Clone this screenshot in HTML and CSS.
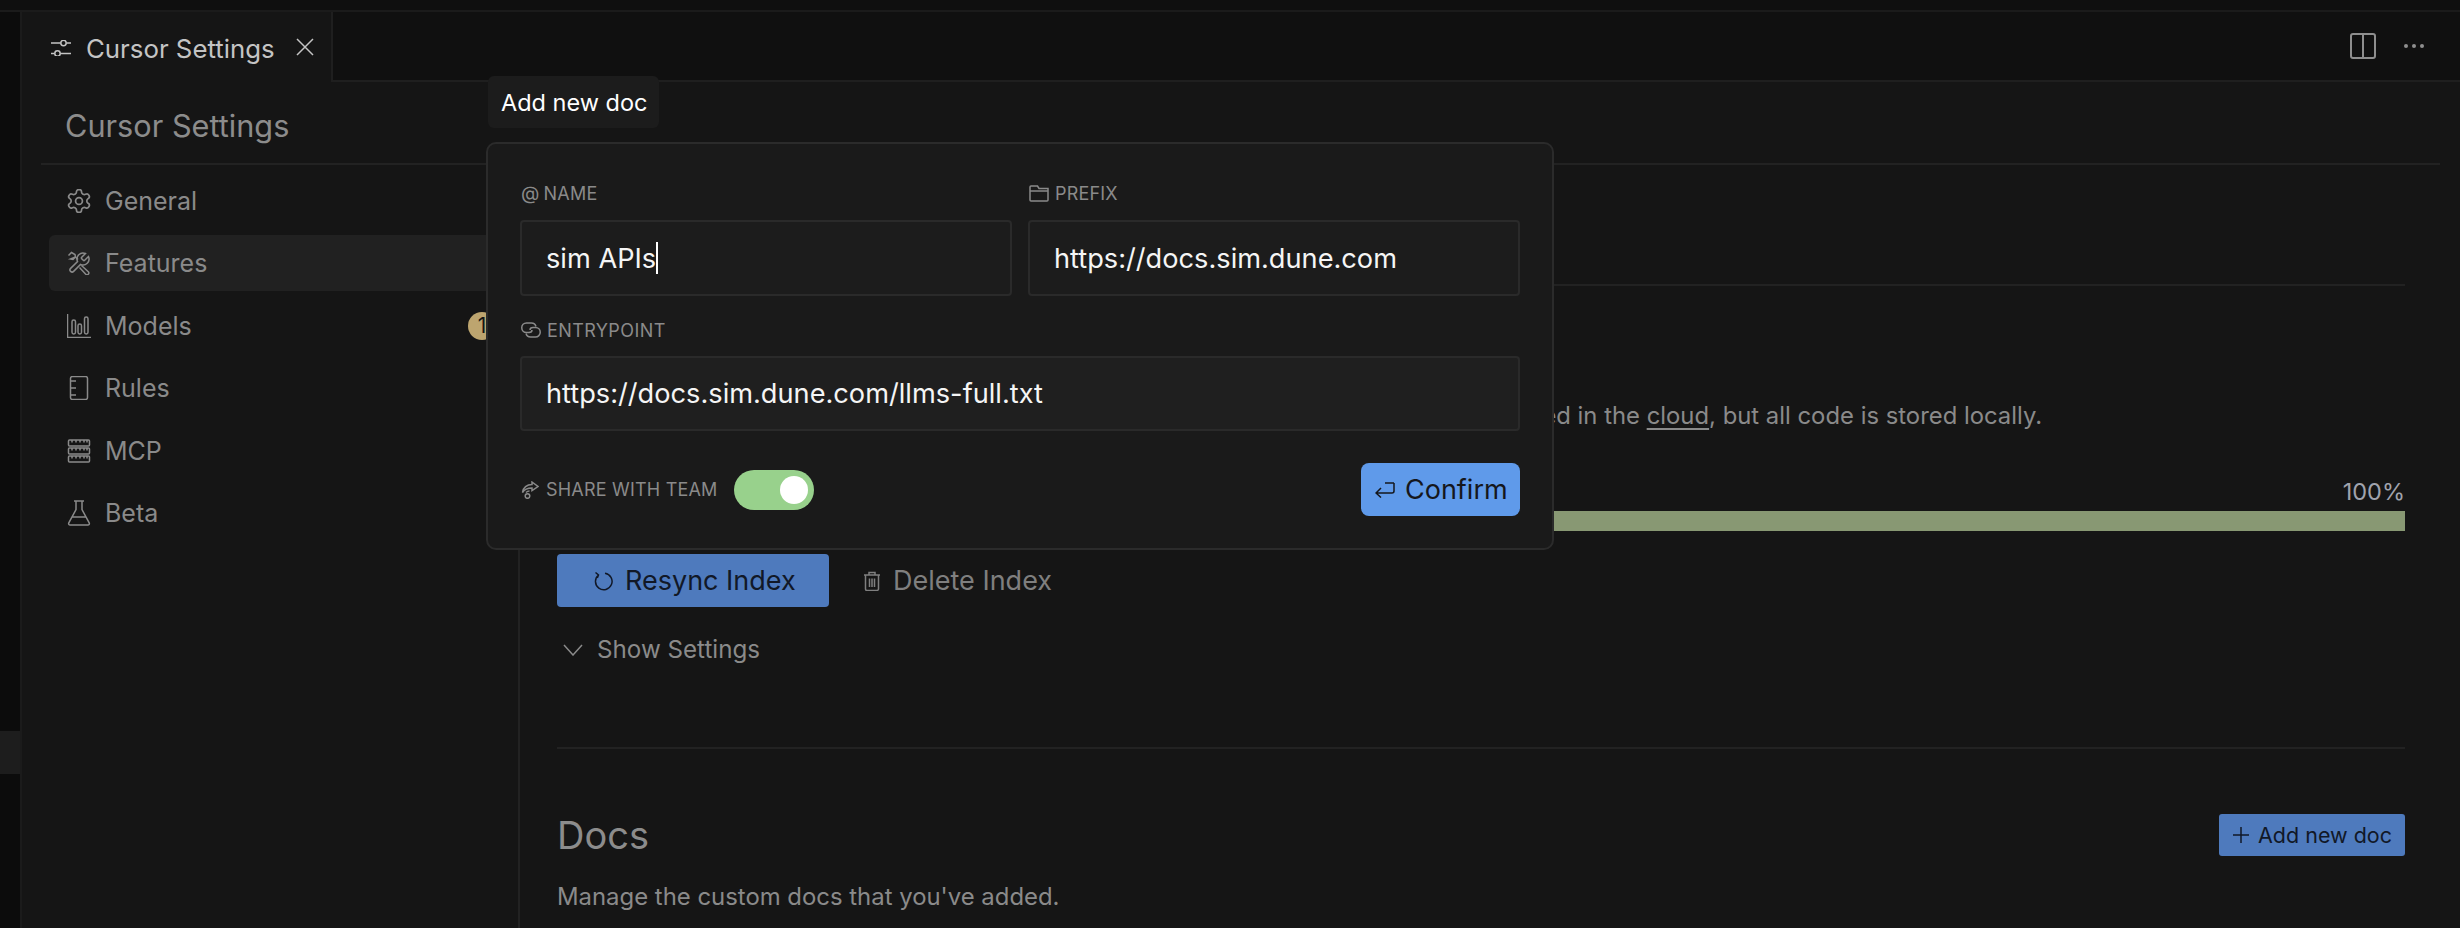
FILE: index.html
```html
<!DOCTYPE html>
<html lang="en">
<head>
  <meta charset="UTF-8">
  <title>Cursor Settings</title>
  <link rel="stylesheet" href="styles.css">
</head>
<body>

  <div class="top-strip"></div>

  <div class="window">
    <div class="rail"><div class="rail-row"></div></div>

    <div class="main">
      <div class="tabs">
        <div class="tab">
          <svg class="tab-icon" width="20" height="16" viewBox="0 0 20 16"><path d="M0 3h9.500M15.500 3H20M0 13.500h3.500M9.500 13.500H20"/><circle cx="12.500" cy="3" r="2.700"/><circle cx="6.500" cy="13.500" r="2.700"/></svg>
          <span class="tab-title">Cursor Settings</span>
          <svg class="tab-close" width="18" height="18" viewBox="0 0 18 18"><path d="M1 1l16 16M17 1L1 17"/></svg>
        </div>
        <div class="tab-actions">
          <svg class="split-icon" width="26" height="26" viewBox="0 0 26 26"><rect x="1" y="1" width="24" height="24" rx="2"/><path d="M13 1v24"/></svg>
          <svg class="dots-icon" width="20" height="6" viewBox="0 0 20 6"><circle cx="2" cy="3" r="2"/><circle cx="10" cy="3" r="2"/><circle cx="18" cy="3" r="2"/></svg>
        </div>
      </div>

      <div class="settings-head"><h1>Cursor Settings</h1></div>

      <div class="settings-body">
        <nav class="sidebar">
          <div class="nav-item">
            <svg class="icon" width="24" height="24" viewBox="1.500 1.500 21 21"><path d="M12.220 2h-.44a2 2 0 0 0-2 2v.18a2 2 0 0 1-1 1.730l-.43.25a2 2 0 0 1-2 0l-.15-.08a2 2 0 0 0-2.730.73l-.22.38a2 2 0 0 0 .73 2.730l.15.1a2 2 0 0 1 1 1.720v.51a2 2 0 0 1-1 1.740l-.15.09a2 2 0 0 0-.73 2.730l.22.38a2 2 0 0 0 2.730.73l.15-.08a2 2 0 0 1 2 0l.43.25a2 2 0 0 1 1 1.730V20a2 2 0 0 0 2 2h.44a2 2 0 0 0 2-2v-.18a2 2 0 0 1 1-1.730l.43-.25a2 2 0 0 1 2 0l.15.08a2 2 0 0 0 2.730-.73l.22-.39a2 2 0 0 0-.73-2.730l-.15-.08a2 2 0 0 1-1-1.740v-.5a2 2 0 0 1 1-1.740l.15-.09a2 2 0 0 0 .73-2.730l-.22-.38a2 2 0 0 0-2.730-.73l-.15.08a2 2 0 0 1-2 0l-.43-.25a2 2 0 0 1-1-1.730V4a2 2 0 0 0-2-2z"/><circle cx="12" cy="12" r="3"/></svg>
            <span>General</span>
          </div>
          <div class="nav-item active">
            <svg class="icon" width="24" height="24" viewBox="0 0 24 24"><path d="M14.700 6.300a1 1 0 0 0 0 1.400l1.600 1.600a1 1 0 0 0 1.400 0l3.770-3.770a6 6 0 0 1-7.940 7.940l-6.910 6.910a2.120 2.120 0 0 1-3-3l6.910-6.910a6 6 0 0 1 7.940-7.940l-3.760 3.760z"/><path d="M1.500 4.500l3-3 3.500 2 .5 2.500 2.500 2.500M8.500 6l-2.500 2.500-2.500-.5zM14.500 14.500l7 6.500a1.800 1.800 0 0 1-2.500 2.500l-6.500-7"/></svg>
            <span>Features</span>
          </div>
          <div class="nav-item">
            <svg class="icon" width="24" height="24" viewBox="0 0 24 24"><path d="M.5 0v23.500h24"/><rect x="5" y="6" width="3.500" height="14" rx="1.700"/><rect x="11" y="10" width="3.500" height="10" rx="1.700"/><rect x="17.500" y="3" width="3.500" height="17" rx="1.700"/></svg>
            <span>Models</span>
            <span class="badge">1</span>
          </div>
          <div class="nav-item">
            <svg class="icon" width="24" height="24" viewBox="0 0 24 24"><rect x="3.500" y=".5" width="17" height="23" rx="2"/><path d="M3.500 5H9M3.500 12H9M3.500 19H9"/></svg>
            <span>Rules</span>
          </div>
          <div class="nav-item">
            <svg class="icon" width="24" height="24" viewBox="0 0 24 24"><rect x="1.500" y="1" width="21" height="6" rx="1"/><rect x="1.500" y="9" width="21" height="6" rx="1"/><rect x="1.500" y="17" width="21" height="6" rx="1"/><path d="M5 1v2.500M9 1v2.500M13 1v2.500M17 1v2.500M20 1v2.500M5 9v2.500M9 9v2.500M13 9v2.500M17 9v2.500M20 9v2.500M5 17v2.500M9 17v2.500M13 17v2.500M17 17v2.500M20 17v2.500"/></svg>
            <span>MCP</span>
          </div>
          <div class="nav-item">
            <svg class="icon" width="24" height="26" viewBox="0 0 24 26"><path d="M7 1h10M9 1v8.500L1.800 22.800a1.500 1.500 0 0 0 1.300 2.200h17.800a1.500 1.500 0 0 0 1.300-2.200L15 9.500V1M5 17h14"/></svg>
            <span>Beta</span>
          </div>
        </nav>

        <main class="content">
          <div class="content-head"></div>

          <p class="desc">Embed codebase for improved code understanding. Embeddings and metadata are stored in the <span class="link">cloud</span>, but all code is stored locally.</p>

          <div class="progress-label">100%</div>
          <div class="progress-bar"></div>

          <div class="index-actions">
            <button class="btn-primary">
              <svg class="btn-icon" width="20" height="20" viewBox="0 0 20 20"><path d="M5.500 4a8.300 8.300 0 1 0 6.500-1.800M2.500 1.500l3 2.500-1.200 3"/></svg>
              Resync Index
            </button>
            <button class="btn-plain">
              <svg class="icon" width="18" height="20" viewBox="0 0 18 20"><path d="M1 4h16M6 4V1.500h6V4M2.500 4v14a1.500 1.500 0 0 0 1.500 1.500h10a1.500 1.500 0 0 0 1.500-1.500V4M6.500 7.500v8.500M9 7.500v8.500M11.500 7.500v8.500"/></svg>
              Delete Index
            </button>
          </div>

          <div class="show-settings">
            <svg class="icon" width="20" height="12" viewBox="0 0 20 12"><path d="M1 1l9 10 9-10"/></svg>
            Show Settings
          </div>

          <div class="divider"></div>

          <div class="docs-head">
            <h2>Docs</h2>
            <button class="btn-add">
              <svg class="btn-icon" width="16" height="16" viewBox="0 0 16 16"><path d="M8 0v16M0 8h16"/></svg>
              Add new doc
            </button>
          </div>
          <p class="docs-desc">Manage the custom docs that you've added.</p>
        </main>
      </div>
    </div>
  </div>

  <div class="tooltip">Add new doc</div>

  <div class="modal">
    <div class="modal-fields">
      <div class="field">
        <div class="field-label"><span class="at">@</span> <span>NAME</span></div>
        <div class="field-input"><span>sim APIs</span><span class="caret"></span></div>
      </div>
      <div class="field">
        <div class="field-label">
          <svg class="label-icon" width="20" height="17" viewBox="0 0 20 17"><path d="M1 15V2a1 1 0 0 1 1-1h6.500L10 3.500h9V15a1 1 0 0 1-1 1H2a1 1 0 0 1-1-1zM1 6h18"/></svg>
          <span>PREFIX</span>
        </div>
        <div class="field-input"><span>https://docs.sim.dune.com</span></div>
      </div>
      <div class="field field-wide">
        <div class="field-label">
          <svg class="label-icon" width="20" height="16" viewBox="0 0 20 16"><path d="M8 10.500H5.500a4.700 4.700 0 0 1 0-9.500h5a4.700 4.700 0 0 1 4.500 3.500M8 10.500c2 0 3-1 3-2.500"/><path d="M12 5.500h2.500a4.700 4.700 0 0 1 0 9.500h-5a4.700 4.700 0 0 1-4.500-3.500M12 5.500c-2 0-3 1-3 2.500"/></svg>
          <span>ENTRYPOINT</span>
        </div>
        <div class="field-input field-input-wide"><span>https://docs.sim.dune.com/llms-full.txt</span></div>
      </div>
    </div>

    <div class="modal-footer">
      <div class="share">
        <svg class="label-icon" width="18" height="18" viewBox="0 0 18 18"><path d="M11 1l6 4.500-6 4V7C6 7 3 9 1.500 11.500 2 6.500 6 3.500 11 3.500zM5 11.500c1-1 2-1.500 3.500-1.500"/><circle cx="6.500" cy="15" r="2.300"/></svg>
        <span>SHARE WITH TEAM</span>
        <div class="toggle"><div class="knob"></div></div>
      </div>
      <button class="btn-confirm">
        <svg class="btn-icon" width="20" height="16" viewBox="0 0 20 16"><path d="M19 1v8a2 2 0 0 1-2 2H1.500M6 6l-5 5 5 4.500"/><path d="M10 1h9"/></svg>
        Confirm
      </button>
    </div>
  </div>

</body>
</html>
```

FILE: styles.css
```css
* {
  box-sizing: border-box;
}
html, body {
  margin: 0;
  height: 928px;
  overflow: hidden;
}
body {
  position: relative;
  font-family: Inter, "Liberation Sans", sans-serif;
  background: #0d0d0d;
  color: #8a8a8a;
}
svg {
  fill: none;
  stroke: currentColor;
  stroke-width: 1.5;
  flex: none;
}
button {
  font-family: inherit;
  border: none;
  display: flex;
  align-items: center;
}

.top-strip {
  height: 12px;
  background: #0f0f0f;
  border-bottom: 2px solid #1b1b1b;
}
.window {
  display: flex;
  height: 916px;
}
.rail {
  width: 22px;
  background: #0c0c0c;
  border-right: 2px solid #1b1b1b;
}
.rail-row {
  height: 43px;
  margin-top: 719px;
  background: #1d1d1d;
}
.main {
  flex: 1;
  background: #151515;
  min-width: 0;
}

/* tab bar */
.tabs {
  display: flex;
  height: 70px;
  background: #101010;
}
.tab {
  width: 311px;
  height: 70px;
  display: flex;
  align-items: center;
  padding: 2px 0 0 29px;
  background: #151515;
  border-right: 2px solid #1f1f1f;
  color: #c4c4c4;
}
.tab-title {
  font-size: 25.800px;
  margin-left: 15px;
}
.tab-close {
  margin: 0 0 2px 21px;
}
.tab-actions {
  flex: 1;
  display: flex;
  align-items: center;
  justify-content: flex-end;
  gap: 28px;
  padding-right: 36px;
  border-bottom: 2px solid #1f1f1f;
  color: #8e8e8e;
}
.split-icon {
  stroke-width: 2;
}
.dots-icon {
  fill: currentColor;
  stroke: none;
}

/* page header */
.settings-head {
  height: 83px;
  margin: 0 20px 0 19px;
  padding-left: 24px;
  border-bottom: 2px solid #222;
  display: flex;
  align-items: center;
}
h1 {
  margin: 5px 0 0;
  font-size: 30.700px;
  font-weight: 400;
  color: #8c8c8c;
}

.settings-body {
  display: flex;
  height: 763px;
}
.sidebar {
  width: 498px;
  padding: 8px 10px 0 27px;
  border-right: 2px solid #222;
  display: flex;
  flex-direction: column;
  gap: 6.400px;
}
.nav-item {
  height: 56px;
  display: flex;
  align-items: center;
  gap: 14px;
  padding: 0 12px 0 18px;
  border-radius: 6px;
  font-size: 25px;
}
.nav-item.active {
  background: #212121;
}
.badge {
  margin-left: auto;
  width: 28px;
  height: 28px;
  border-radius: 50%;
  background: #bda56f;
  color: #151515;
  font-size: 21px;
  text-align: center;
  line-height: 28px;
}

/* main column */
.content {
  flex: 1;
  padding: 0 55px 0 37px;
  min-width: 0;
}
.content-head {
  height: 121px;
  border-bottom: 2px solid #222;
}
.desc {
  margin: 115px 0 0;
  font-size: 23.850px;
  line-height: 30px;
  white-space: nowrap;
}
.link {
  text-decoration: underline;
  text-underline-offset: 4px;
}
.progress-label {
  margin-top: 46px;
  font-size: 23.500px;
  line-height: 30px;
  text-align: right;
  color: #a0a3ad;
}
.progress-bar {
  height: 20px;
  margin-top: 4px;
  background: #889873;
}
.index-actions {
  display: flex;
  margin-top: 23px;
  gap: 34px;
}
.btn-primary {
  width: 272px;
  height: 53px;
  padding-left: 36px;
  gap: 12px;
  border-radius: 4px;
  background: #4e7abd;
  color: #111827;
  font-size: 27px;
}
.btn-plain {
  gap: 12px;
  background: none;
  color: #7f7f7f;
  font-size: 27px;
  padding: 0;
}
.show-settings {
  display: flex;
  align-items: center;
  gap: 14px;
  margin-top: 28px;
  padding-left: 6px;
  font-size: 24.200px;
  line-height: 30px;
}
.divider {
  height: 2px;
  margin-top: 82px;
  background: #222;
}
.docs-head {
  display: flex;
  align-items: center;
  justify-content: space-between;
  height: 48px;
  margin-top: 62px;
}
h2 {
  margin: 0;
  font-size: 38px;
  font-weight: 400;
  color: #8c8c8c;
}
.btn-add {
  height: 42px;
  width: 186px;
  padding-left: 14px;
  gap: 9px;
  border-radius: 3px;
  background: #4e7abd;
  color: #111827;
  font-size: 21.500px;
}
.docs-desc {
  margin: 23px 0 0;
  font-size: 23.900px;
  line-height: 30px;
}

/* overlay */
.tooltip {
  position: absolute;
  left: 488px;
  top: 76px;
  width: 171px;
  height: 52px;
  padding-left: 13px;
  display: flex;
  align-items: center;
  border-radius: 6px;
  background: #1c1c1c;
  color: #fff;
  font-size: 23.500px;
}
.modal {
  position: absolute;
  left: 486px;
  top: 142px;
  width: 1068px;
  height: 408px;
  padding: 38px 32px 0;
  background: #1a1a1a;
  border: 2px solid #2b2b2b;
  border-radius: 10px;
}
.modal-fields {
  display: grid;
  grid-template-columns: 492px 492px;
  column-gap: 16px;
  row-gap: 23px;
}
.field-wide {
  grid-column: 1 / 3;
}
.field-label {
  display: flex;
  align-items: center;
  gap: 6px;
  height: 22px;
  margin-bottom: 16px;
  padding-left: 1px;
  font-size: 18px;
  letter-spacing: .2px;
  color: #8a8a8a;
}
.field-wide .field-label {
  margin-bottom: 15px;
  letter-spacing: .4px;
}
.at {
  font-size: 19px;
  margin-right: -2px;
}
.field-input {
  height: 76px;
  display: flex;
  align-items: center;
  padding-left: 24px;
  background: #1c1c1c;
  border: 2px solid #2a2a2a;
  border-radius: 4px;
  color: #f5f5f5;
  font-size: 27.200px;
}
.field-input-wide {
  height: 75px;
  background: #1f1f1f;
}
.caret {
  width: 2px;
  height: 32px;
  background: #fff;
}
.modal-footer {
  display: flex;
  align-items: center;
  justify-content: space-between;
  margin-top: 32px;
}
.share {
  display: flex;
  align-items: center;
  gap: 7px;
  padding-left: 1px;
  font-size: 18px;
  letter-spacing: .2px;
}
.toggle {
  width: 80px;
  height: 40px;
  margin-left: 9px;
  padding: 6px;
  display: flex;
  justify-content: flex-end;
  border-radius: 20px;
  background: #98d18c;
}
.knob {
  width: 28px;
  height: 28px;
  border-radius: 50%;
  background: #fff;
}
.btn-confirm {
  width: 159px;
  height: 53px;
  padding-left: 14px;
  gap: 10px;
  border-radius: 8px;
  background: #5f9aea;
  color: #15171c;
  font-size: 27px;
}
```
